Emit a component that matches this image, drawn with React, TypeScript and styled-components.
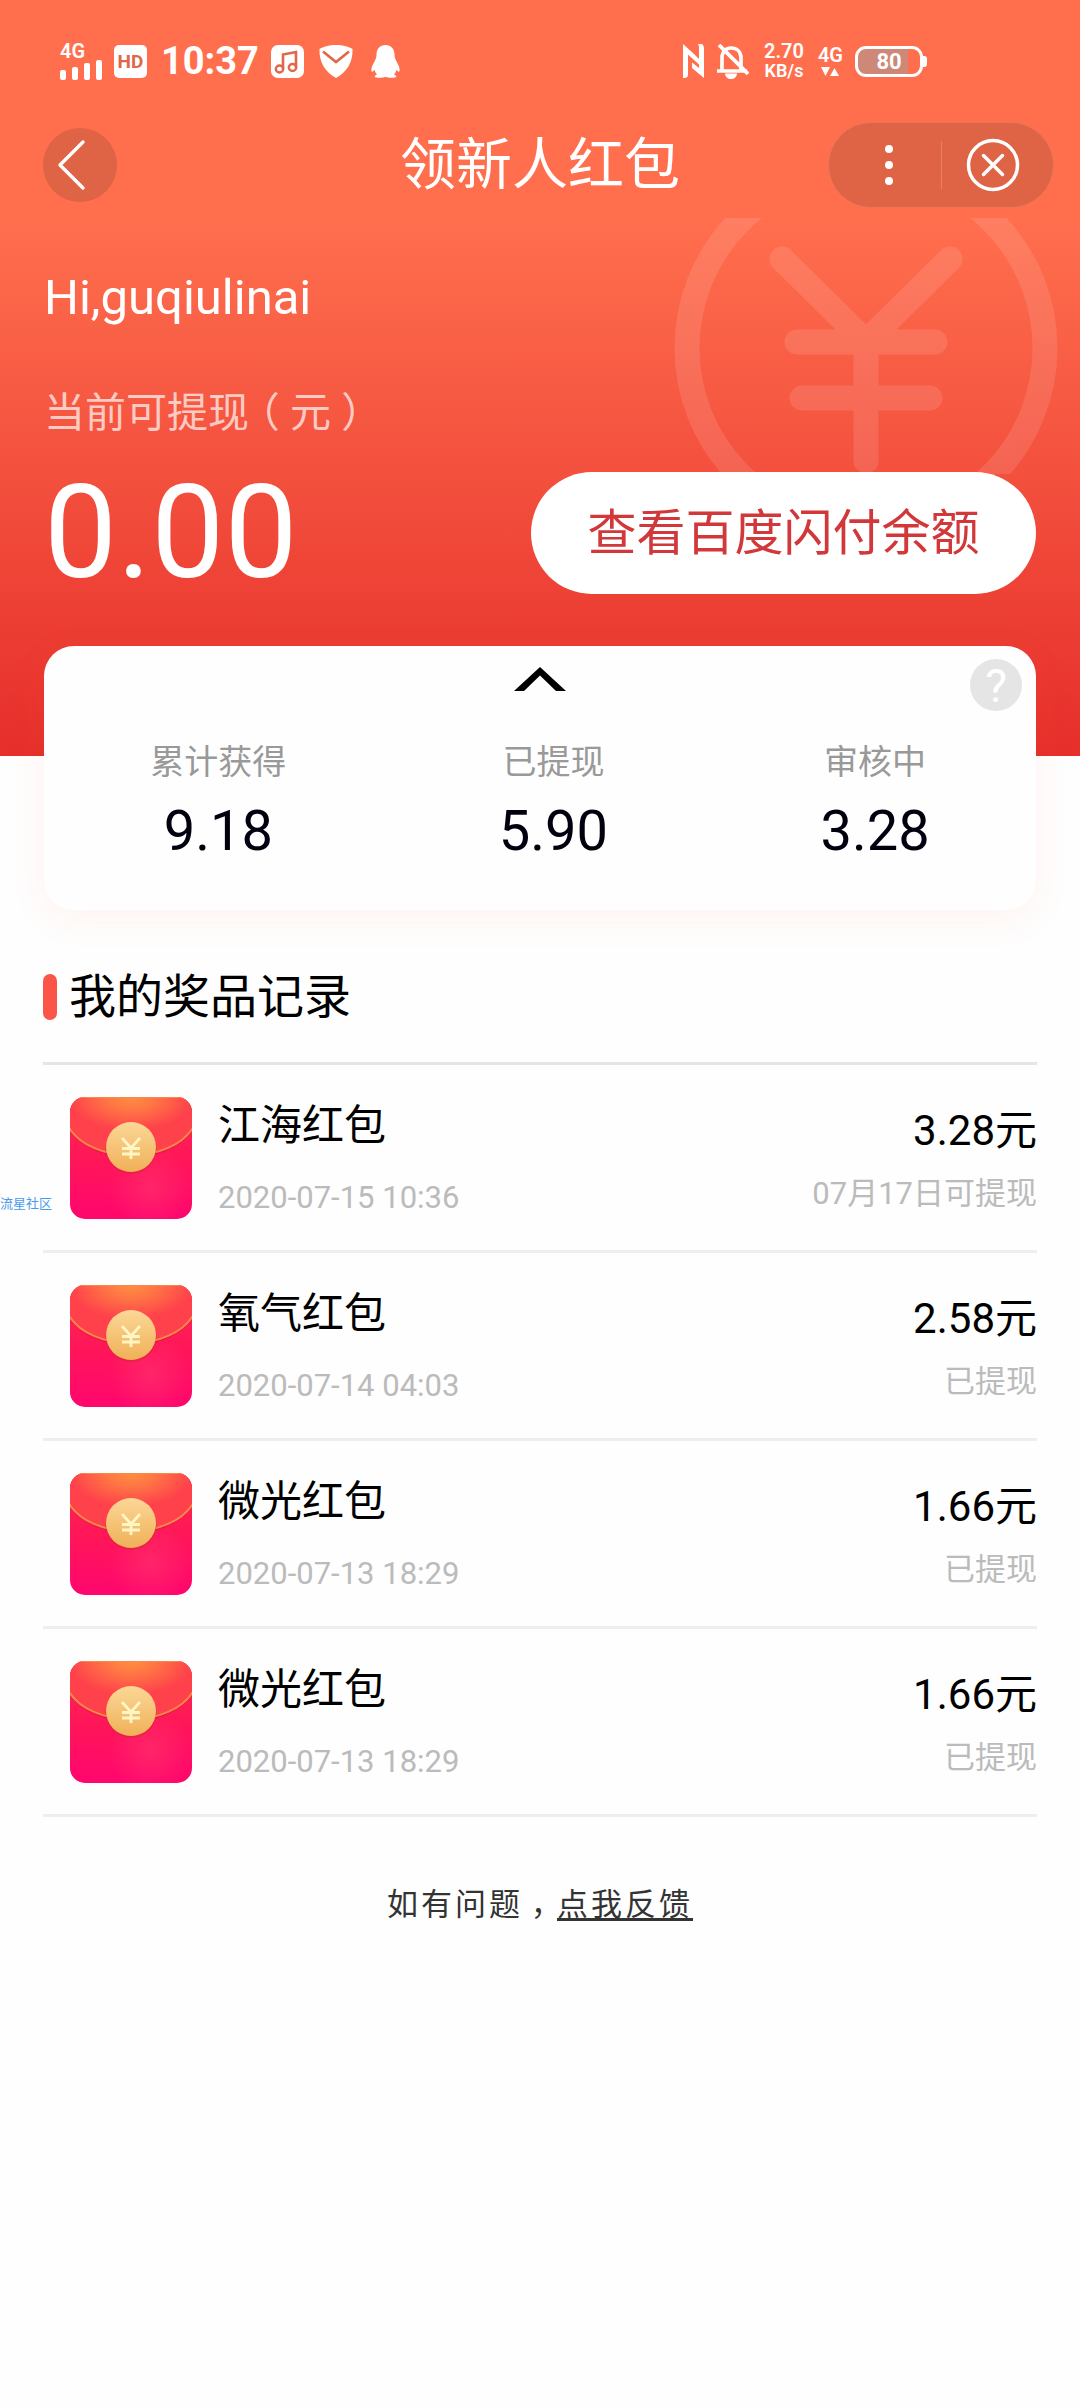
import React from "react";
import styled, { createGlobalStyle } from "styled-components";

const GlobalStyle = createGlobalStyle`
  * { box-sizing: border-box; }
  body {
    margin: 0;
    background: #fefefe;
    color: #000;
    font-family: Roboto, "Noto Sans CJK SC", sans-serif;
  }
  h1, h2, p, ul, dl, dd { margin: 0; padding: 0; font-weight: 400; }
  ul { list-style: none; }
  button { border: 0; padding: 0; background: none; font: inherit; color: inherit; cursor: pointer; }
  svg { display: block; }
`;

const Page = styled.div`
  position: relative;
  min-height: 100vh;
`;

const Header = styled.header`
  background: linear-gradient(#ff6f4e 218px, #e62e2b 100%);
  color: #fff;
`;

/* Full-width punctuation centred in its cell */
const Punctuation = styled.span`
  padding: 0 0.25em;
  font-feature-settings: "halt";
`;

/* ---------- status bar ---------- */

const StatusBar = styled.div`
  display: flex;
  align-items: center;
  justify-content: space-between;
  height: 122px;
  padding: 0 153px 0 60px;
`;

const StatusGroup = styled.div`
  display: flex;
  align-items: center;
`;

const Stack = styled.div<{ $gap?: number; $ml?: number; $start?: boolean }>`
  display: flex;
  flex-direction: column;
  align-items: ${(p) => (p.$start ? "flex-start" : "center")};
  gap: ${(p) => p.$gap ?? 0}px;
  margin-left: ${(p) => p.$ml ?? 0}px;
`;

const Tiny = styled.span<{ $size?: number; $line?: number }>`
  font-size: ${(p) => p.$size ?? 20}px;
  line-height: ${(p) => p.$line ?? 18}px;
  font-weight: 600;
`;

const HdBadge = styled.span`
  width: 33px;
  height: 33px;
  margin-left: 11px;
  border-radius: 5px;
  background: #fff;
  color: #e0674b;
  font-size: 19px;
  line-height: 33px;
  font-weight: 700;
  text-align: center;
`;

const Clock = styled.time`
  margin: 0 12px 0 14px;
  font-size: 38px;
  line-height: 40px;
  font-weight: 700;
`;

const StatusIcon = styled.svg<{ $ml?: number }>`
  margin-left: ${(p) => p.$ml ?? 0}px;
`;

const Battery = styled.span`
  position: relative;
  display: block;
  width: 68px;
  height: 31px;
  margin: 0 4px 0 12px;
  border: 3px solid #fff;
  border-radius: 11px;
  background: linear-gradient(90deg, #cd8878 80%, transparent 80%);
  font-size: 22px;
  line-height: 25px;
  font-weight: 700;
  text-align: center;

  &::after {
    content: "";
    position: absolute;
    right: -7px;
    top: 7px;
    width: 4px;
    height: 11px;
    border-radius: 0 3px 3px 0;
    background: #fff;
  }
`;

/* ---------- navigation ---------- */

const Nav = styled.nav`
  display: grid;
  grid-template-columns: 1fr auto 1fr;
  align-items: center;
  height: 86px;
  margin-bottom: 10px;
  padding: 0 26px;
`;

const BackButton = styled.button`
  width: 74px;
  height: 74px;
  margin-left: 17px;
  border-radius: 50%;
  background: #df6345;
`;

const Title = styled.h1`
  font-size: 56px;
  line-height: 86px;
`;

const Capsule = styled.div`
  justify-self: end;
  display: flex;
  align-items: center;
  width: 226px;
  height: 86px;
  padding: 0 8px;
  border: 1px solid #e9775b;
  border-radius: 43px;
  background: #df6345;
`;

const CapsuleButton = styled.button`
  flex: 1;
  display: flex;
  align-items: center;
  justify-content: center;
  height: 48px;

  & + & { border-left: 1px solid #ea7f65; }
`;

/* ---------- hero ---------- */

const Hero = styled.section`
  position: relative;
  padding: 50px 44px 162px;
`;

const Watermark = styled.svg`
  position: absolute;
  top: 0;
  right: 22px;
`;

const Greeting = styled.p`
  font-size: 49px;
  line-height: 60px;
`;

const BalanceLabel = styled.p`
  margin-top: 60px;
  font-size: 41px;
  line-height: 50px;
  color: rgba(255, 255, 255, 0.7);
`;

const BalanceRow = styled.div`
  position: relative;
  display: flex;
  align-items: center;
  justify-content: space-between;
  height: 122px;
  margin-top: 34px;
`;

const Balance = styled.strong`
  font-size: 130px;
  line-height: 122px;
  font-weight: 400;
`;

const BalanceButton = styled.button`
  width: 505px;
  height: 122px;
  padding-top: 2px;
  border-radius: 61px;
  background: #fff;
  color: #d2373a;
  font-size: 49px;
  line-height: 120px;
`;

/* ---------- summary card ---------- */

const Card = styled.section`
  position: relative;
  margin: -110px 44px 0;
  padding-bottom: 49px;
  border-radius: 30px;
  background: #fefefe;
  box-shadow: 0 8px 36px rgba(255, 110, 60, 0.08);
`;

const Toggle = styled.button`
  display: flex;
  align-items: center;
  justify-content: center;
  width: 100%;
  height: 66px;
`;

const HelpButton = styled.button`
  position: absolute;
  top: 13px;
  right: 14px;
  width: 52px;
  height: 52px;
  border-radius: 50%;
  background: #e5e5e5;
  color: #fff;
  font-size: 46px;
  line-height: 54px;
`;

const Stats = styled.dl`
  display: flex;
  justify-content: space-around;
  margin-top: 30px;
`;

const Stat = styled.div`
  text-align: center;

  dt {
    font-size: 34px;
    line-height: 40px;
    color: #999;
  }
  dd {
    margin-top: 19px;
    font-size: 56px;
    line-height: 60px;
    color: #00000f;
  }
`;

/* ---------- records ---------- */

const Records = styled.section`
  margin-top: 57px;
  padding: 0 43px;
`;

const SectionTitle = styled.h2`
  display: flex;
  align-items: center;
  gap: 12px;
  padding-bottom: 35px;
  border-bottom: 3px solid #e5e5e5;
  font-size: 47px;
  line-height: 60px;

  &::before {
    content: "";
    width: 14px;
    height: 46px;
    border-radius: 7px;
    background: #fb5449;
  }
`;

const Row = styled.li`
  display: flex;
  align-items: center;
  gap: 26px;
  height: 188px;
  padding-left: 27px;
  border-bottom: 3px solid #eee;
`;

const Column = styled.div<{ $end?: boolean }>`
  display: flex;
  flex-direction: column;
  gap: ${(p) => (p.$end ? 18 : 27)}px;
  margin-left: ${(p) => (p.$end ? "auto" : 0)};
  padding-top: 4px;
  text-align: ${(p) => (p.$end ? "right" : "left")};
`;

const Primary = styled.span`
  font-size: 42px;
  line-height: 50px;
`;

const Secondary = styled.span`
  font-size: 31px;
  line-height: 40px;
  color: #bbb;
`;

const Feedback = styled.p`
  margin-top: 68px;
  font-size: 31px;
  line-height: 40px;
  letter-spacing: 3px;
  text-align: center;
  color: #333;

  a {
    color: inherit;
    text-decoration-thickness: 3px;
    text-underline-offset: 3px;
    text-decoration-skip-ink: none;
  }
`;

const CommunityMark = styled.span`
  position: absolute;
  left: 0;
  top: 1196px;
  font-size: 13px;
  line-height: 16px;
  color: #4a98ee;
`;

function EnvelopeIcon({ id }: { id: string }) {
  return (
    <svg width="122" height="122" viewBox="0 0 122 122" aria-hidden="true">
      <defs>
        <linearGradient id={`${id}-body`} x1="0" y1="0" x2="0" y2="1">
          <stop offset="0" stopColor="#ff2a4a" />
          <stop offset="0.55" stopColor="#ff155a" />
          <stop offset="1" stopColor="#ff066e" />
        </linearGradient>
        <radialGradient id={`${id}-flap`} gradientUnits="userSpaceOnUse" cx="0" cy="0" r="1" gradientTransform="translate(61 0) scale(62 34)">
          <stop offset="0" stopColor="#ff8f42" />
          <stop offset="0.4" stopColor="#ff7544" />
          <stop offset="1" stopColor="#ff414b" />
        </radialGradient>
        <radialGradient id={`${id}-glow`} cx="0.66" cy="0.74" r="0.34">
          <stop offset="0" stopColor="#ff3b70" stopOpacity="0.5" />
          <stop offset="1" stopColor="#ff3b70" stopOpacity="0" />
        </radialGradient>
        <linearGradient id={`${id}-coin`} x1="0" y1="0" x2="0" y2="1">
          <stop offset="0" stopColor="#fbd796" />
          <stop offset="1" stopColor="#f0b058" />
        </linearGradient>
        <clipPath id={`${id}-clip`}>
          <rect width="122" height="122" rx="15" />
        </clipPath>
      </defs>
      <g clipPath={`url(#${id}-clip)`}>
        <rect width="122" height="122" fill={`url(#${id}-body)`} />
        <rect width="122" height="122" fill={`url(#${id}-glow)`} />
        <path d="M-2 0V29C20 68 102 68 124 29V0Z" fill="#c8102f" opacity="0.45" transform="translate(0 2)" />
        <path d="M-2 0V29C20 68 102 68 124 29V0Z" fill={`url(#${id}-flap)`} stroke="#f7884a" strokeWidth="2" />
        <circle cx="61" cy="51.500" r="25.500" fill="#d6252f" opacity="0.5" />
        <circle cx="61" cy="50" r="25" fill={`url(#${id}-coin)`} />
        <path d="M52 41l9 10 9-10M61 51v11M52 51.500h18M52 57h18" fill="none" stroke="#fff6c4" strokeWidth="2.800" />
      </g>
    </svg>
  );
}

const records = [
  { name: "江海红包", time: "2020-07-15 10:36", amount: "3.28元", status: "07月17日可提现" },
  { name: "氧气红包", time: "2020-07-14 04:03", amount: "2.58元", status: "已提现" },
  { name: "微光红包", time: "2020-07-13 18:29", amount: "1.66元", status: "已提现" },
  { name: "微光红包", time: "2020-07-13 18:29", amount: "1.66元", status: "已提现" },
];

const stats = [
  { label: "累计获得", value: "9.18" },
  { label: "已提现", value: "5.90" },
  { label: "审核中", value: "3.28" },
];

export default function App() {
  return (
    <Page>
      <GlobalStyle />
      <Header>
        <StatusBar>
          <StatusGroup>
            <Stack $start>
              <Tiny>4G</Tiny>
              <svg width="43" height="20" viewBox="0 0 43 20" fill="#fff">
                <rect x="0" y="10" width="6" height="10" rx="2" />
                <rect x="12" y="7" width="6" height="13" rx="2" />
                <rect x="24" y="3" width="6" height="17" rx="2" />
                <rect x="36" y="0" width="6" height="20" rx="2" />
              </svg>
            </Stack>
            <HdBadge>HD</HdBadge>
            <Clock>10:37</Clock>
            <StatusIcon width="33" height="33" viewBox="0 0 33 33">
              <rect width="33" height="33" rx="7" fill="#fff" />
              <path d="M12 24V9.500L25 7v15.500" fill="none" stroke="#e0674b" strokeWidth="2.600" />
              <ellipse cx="8.500" cy="24" rx="3.700" ry="3.500" fill="none" stroke="#e0674b" strokeWidth="2.400" />
              <ellipse cx="21.500" cy="22.500" rx="3.700" ry="3.500" fill="none" stroke="#e0674b" strokeWidth="2.400" />
            </StatusIcon>
            <StatusIcon $ml={15} width="34" height="33" viewBox="0 0 34 33">
              <path d="M17 0C24 0 30 2 33.500 4C34 17 28 27 17 33C6 27 0 17 .5 4C4 2 10 0 17 0Z" fill="#fff" />
              <path d="M4 6.500L17 17L30 6.500" fill="none" stroke="#e0674b" strokeWidth="2.600" />
            </StatusIcon>
            <StatusIcon $ml={18} width="29" height="33" viewBox="0 0 29 33" fill="#fff">
              <path d="M14.500 0C20 0 23.500 4 23.500 9.500C23.500 12 24 13.500 25.500 16.500C27.500 20 29 23 28.500 26C28 27.500 26.500 26.500 25.500 24.500C25 26.500 24.500 28 23 29.500C24.500 30.300 25.500 31 25.300 32C25 33 17 33.300 14.500 31.800C12 33.300 4 33 3.700 32C3.500 31 4.500 30.300 6 29.500C4.500 28 4 26.500 3.500 24.500C2.500 26.500 1 27.500 .5 26C0 23 1.500 20 3.500 16.500C5 13.500 5.500 12 5.500 9.500C5.500 4 9 0 14.500 0Z" />
            </StatusIcon>
          </StatusGroup>

          <StatusGroup>
            <StatusIcon width="23" height="34" viewBox="0 0 23 34" fill="#fff">
              <path d="M1 0L12 10V15.500L6 10.500V30C6 33 5 34 2 34H1Z" />
              <path d="M22 34L10 24V18.500L17 24V5C17 2 17 0 15 0H19C21 0 22 2 22 5Z" />
              <path d="M12 10L17 15V20.500L6 10.500Z" />
            </StatusIcon>
            <StatusIcon $ml={12} width="32" height="35" viewBox="0 0 32 35" fill="none" stroke="#fff">
              <path d="M5 26V14C5 8 9 4 14 4C20 4 24 8 24 14V26M0 27H30" strokeWidth="3.600" />
              <path d="M8 29.500H20C20 33 17 35 14 35S8 33 8 29.500Z" fill="#fff" stroke="none" />
              <path d="M2 1L31 30" strokeWidth="3.800" />
            </StatusIcon>
            <Stack $ml={15}>
              <Tiny $size={20} $line={20}>2.70</Tiny>
              <Tiny $size={18} $line={20}>KB/s</Tiny>
            </Stack>
            <Stack $ml={14} $gap={3}>
              <Tiny>4G</Tiny>
              <svg width="18" height="10" viewBox="0 0 18 10" fill="#fff">
                <path d="M0 0H9L4.500 9ZM9 9H18L13.500 1Z" />
              </svg>
            </Stack>
            <Battery>80</Battery>
          </StatusGroup>
        </StatusBar>

        <Nav>
          <BackButton aria-label="返回">
            <svg width="74" height="74" viewBox="0 0 74 74" fill="none" stroke="#fff" strokeWidth="3.400" strokeLinecap="round" strokeLinejoin="round">
              <path d="M40 14L17 37L40 60" />
            </svg>
          </BackButton>
          <Title>领新人红包</Title>
          <Capsule>
            <CapsuleButton aria-label="更多">
              <svg width="10" height="42" viewBox="0 0 10 42" fill="#fff">
                <circle cx="5" cy="5" r="4" />
                <circle cx="5" cy="21" r="4" />
                <circle cx="5" cy="37" r="4" />
              </svg>
            </CapsuleButton>
            <CapsuleButton aria-label="关闭">
              <svg width="54" height="54" viewBox="0 0 54 54" fill="none" stroke="#fff" strokeWidth="3.500" strokeLinecap="round">
                <circle cx="27" cy="27" r="24.500" />
                <path d="M17.500 17.500L36.500 36.500M36.500 17.500L17.500 36.500" />
              </svg>
            </CapsuleButton>
          </Capsule>
        </Nav>

        <Hero>
          <Watermark width="384" height="256" viewBox="674 218 384 256" aria-hidden="true">
            <g opacity="0.11" fill="none" stroke="#fff" strokeWidth="25" strokeLinecap="round">
              <circle cx="866" cy="348" r="179" />
              <path d="M782 259L866 342L950 259M797 342H935M802 398H930M866 342V461" />
            </g>
          </Watermark>
          <Greeting>Hi,guqiulinai</Greeting>
          <BalanceLabel>
            当前可提现<Punctuation>（</Punctuation>元<Punctuation>）</Punctuation>
          </BalanceLabel>
          <BalanceRow>
            <Balance>0.00</Balance>
            <BalanceButton>查看百度闪付余额</BalanceButton>
          </BalanceRow>
        </Hero>
      </Header>

      <Card>
        <Toggle aria-label="收起">
          <svg width="52" height="24" viewBox="0 0 52 24">
            <path d="M0 24L26 0L52 24H42L26 8.500L10 24Z" fill="#000" />
          </svg>
        </Toggle>
        <HelpButton aria-label="帮助">?</HelpButton>
        <Stats>
          {stats.map((s) => (
            <Stat key={s.label}>
              <dt>{s.label}</dt>
              <dd>{s.value}</dd>
            </Stat>
          ))}
        </Stats>
      </Card>

      <Records>
        <SectionTitle>我的奖品记录</SectionTitle>
        <ul>
          {records.map((r, i) => (
            <Row key={i}>
              <EnvelopeIcon id={`envelope-${i}`} />
              <Column>
                <Primary>{r.name}</Primary>
                <Secondary>{r.time}</Secondary>
              </Column>
              <Column $end>
                <Primary>{r.amount}</Primary>
                <Secondary>{r.status}</Secondary>
              </Column>
            </Row>
          ))}
        </ul>
      </Records>

      <Feedback>
        如有问题<Punctuation>，</Punctuation>
        <a href="#feedback">点我反馈</a>
      </Feedback>

      <CommunityMark>流星社区</CommunityMark>
    </Page>
  );
}
